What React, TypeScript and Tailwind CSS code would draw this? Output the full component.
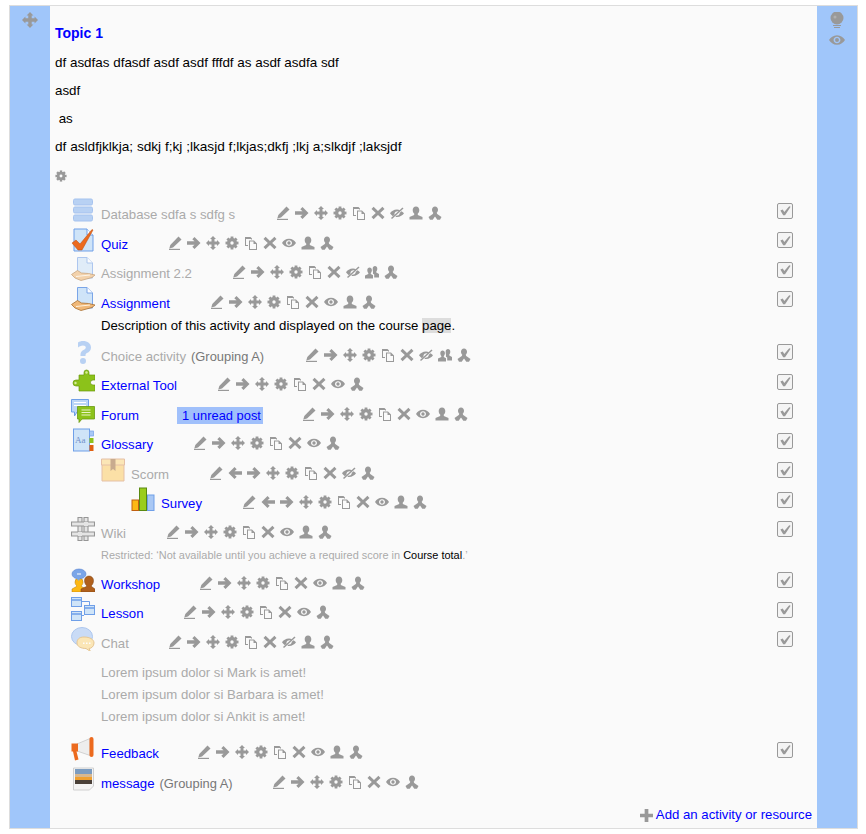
import type { ReactNode } from 'react';

type ActionName = 'edit' | 'left' | 'right' | 'move' | 'gear' | 'copy' | 'x' | 'eye' | 'eyeoff' | 'person' | 'group' | 'role';

const movePath =
  'M7 0l3 3H8.500v2.500H11V4l3 3-3 3V8.500H8.500V11H10l-3 3-3-3h1.500V8.500H3V10L0 7l3-3v1.500h2.500V3H4z';
const eyePath =
  'M7 2.800c3.200 0 5.700 2 7 4.200-1.300 2.200-3.800 4.200-7 4.200S1.300 9.200 0 7c1.300-2.200 3.800-4.200 7-4.200zm0 1.400C5.300 4.200 4 5.400 4 7s1.300 2.800 3 2.800S10 8.600 10 7 8.700 4.200 7 4.200zM7 5.300a1.700 1.700 0 110 3.400 1.700 1.700 0 010-3.400z';

function GearShape() {
  return (
    <>
      <circle cx="7" cy="7" r="3.500" fill="none" stroke="#999999" strokeWidth="3" />
      {[0, 45, 90, 135].map((a) => (
        <rect key={a} x="5.600" y="0.500" width="2.800" height="13" transform={`rotate(${a} 7 7)`} />
      ))}
      <circle cx="7" cy="7" r="1.700" fill="#fafafa" />
    </>
  );
}

function ActionIcon({ name }: { name: ActionName }) {
  const shapes: Record<ActionName, ReactNode> = {
    edit: (
      <>
        <path d="M10.500 .5l3 3-8.500 8-3.700 1 1-3.600z" />
        <rect x="1" y="12.800" width="11" height="1.200" />
      </>
    ),
    left: <path d="M6.500 1l2.200 2.200L6.500 5.300H14v3.400H6.500l2.200 2.100L6.500 13 .5 7z" />,
    right: <path d="M7.500 1L5.300 3.200l2.200 2.100H0v3.400h7.500l-2.200 2.100L7.500 13l6-6z" />,
    move: <path d={movePath} />,
    gear: <GearShape />,
    copy: (
      <>
        <path d="M1 1h5.500l1.500 1.500V3.500H7V3H2v6h2v1H1z" />
        <path d="M5 4.500h5l3 3V14H5zm1 1V13h6V8H9.500V5.500z" fillRule="evenodd" />
      </>
    ),
    x: <path d="M2.600 .8L7 5l4.400-4.200 2.100 2.100L9.200 7l4.300 4.100-2.100 2.100L7 9l-4.400 4.200-2.100-2.100L4.800 7 .5 2.900z" />,
    eye: <path d={eyePath} fillRule="evenodd" />,
    eyeoff: (
      <>
        <path
          d="M7 3.500c1.100 0 2.200.3 3.100.8L8.800 5.500A3 3 0 004.500 8.800L2.900 10.200C1.700 9.500.7 8.300 0 7.300c1.300-2 3.800-3.800 7-3.800zM11.500 5.300c1 .6 1.900 1.200 2.500 2-1.300 2-3.800 3.700-7 3.700-.6 0-1.100-.1-1.700-.2L6.700 9.600A3 3 0 009.800 6.800z"
          fillRule="evenodd"
        />
        <path d="M12.500 1.500l1 1L2 13l-1-1z" />
      </>
    ),
    person: <path d="M7 .5c2 0 3.300 1.500 3.300 3.600 0 1.600-.7 2.900-1.500 3.500v1.300L13.500 11v2.500H.5V11l4.700-2.100V7.600C4.400 7 3.700 5.700 3.700 4.100 3.700 2 5 .5 7 .5z" />,
    group: (
      <>
        <path d="M4.600 2.500c1.300 0 2.300 1 2.300 2.700 0 1.200-.5 2.200-1.100 2.700v1l2.200 1.300v3.300H0v-3l3.300-1.600v-1C2.700 7.400 2.300 6.400 2.300 5.200c0-1.700 1-2.700 2.300-2.700z" />
        <path d="M10 1c1.300 0 2.300 1 2.300 2.700 0 1.200-.4 2.200-1 2.700v1L14 9v3.500H9.200V9.600L8 8.800V6.500C7.800 6 7.700 4.900 7.700 3.700 7.700 2 8.700 1 10 1z" />
      </>
    ),
    role: <path d="M7 .5c1.800 0 3 1.400 3 3.300 0 1.300-.6 2.400-1.300 3L9.200 8l4.300 3-1.500 2.800H9.300L7 10.500l-2.300 3.300H2L.5 11l4.300-3 .5-1.200C4.600 6.200 4 5.100 4 3.800 4 1.900 5.200.5 7 .5z" />,
  };
  return (
    <svg viewBox="0 0 14 14" className="w-[14px] h-[14px] fill-[#999999]">
      {shapes[name]}
    </svg>
  );
}

function Actions({ names }: { names: ActionName[] }) {
  return (
    <div className="flex gap-[5px] mt-[8px]">
      {names.map((n, i) => (
        <ActionIcon key={i} name={n} />
      ))}
    </div>
  );
}

function CheckBox() {
  return (
    <div className="absolute right-[24px] top-[4.5px] w-[16px] h-[16px] rounded-[2px] border border-[#999999] bg-[#f4f4f4] flex items-center justify-center">
      <svg viewBox="0 0 14 14" className="w-[13px] h-[13px] fill-[#999999]">
        <path d="M1.500 7l2.500-1 1.700 2.500L11 2.500l1.500.5L6.500 12h-2z" />
      </svg>
    </div>
  );
}

function ActivityIcon({ name }: { name: string }) {
  const hand = (
    <>
      <path d="M.5 17.500l6-4 4 2.500 7 .5 6.500 1.500-3 2.500-11 3-6-2.500z" fill="#f0b878" stroke="#a86e30" strokeWidth=".8" />
      <path d="M5 19.500l14-1.500" stroke="#fff3e0" strokeWidth="1" />
    </>
  );
  const sheet = (
    <>
      <path d="M6.500 .5h9.500l5.500 5.500v15H6.500z" fill="#cfe4f8" stroke="#7aa5e8" />
      <path d="M16 .5V6h5.500" fill="#fff" stroke="#7aa5e8" />
    </>
  );
  const art: Record<string, ReactNode> = {
    database: (
      <>
        <rect x="2.500" y="1" width="19" height="6" rx="1.500" fill="#8db6f0" stroke="#6f9fe8" />
        <rect x="2.500" y="9" width="19" height="6" rx="1.500" fill="#8db6f0" stroke="#6f9fe8" />
        <rect x="2.500" y="17" width="19" height="6" rx="1.500" fill="#8db6f0" stroke="#6f9fe8" />
      </>
    ),
    quiz: (
      <>
        <path d="M3 1h13l6 6v16H3z" fill="#cfe4f8" stroke="#6f9fe8" />
        <path d="M16 1v6h6" fill="#fff" stroke="#6f9fe8" />
        <path d="M1 15l4-3 4 4L21 1.500 22 2 11 22H7z" fill="#ec6a1e" stroke="#b84c0c" strokeWidth=".5" />
      </>
    ),
    assign: (
      <>
        {sheet}
        {hand}
      </>
    ),
    choice: (
      <path d="M12 1c4.500 0 8 2.500 8 6.500 0 3-2 4.500-4 5.500-1.500.8-1.500 1.500-1.500 3h-5c0-3.500.5-4.500 3-6 1.500-.8 2.300-1.500 2.300-2.500 0-1.200-1.100-2-2.800-2-2 0-4 1-5 2V2.500C8.500 1.500 10 1 12 1zM12 18a3 3 0 110 6 3 3 0 010-6z" fill="#8db6f0" />
    ),
    tool: (
      <>
        <path d="M8 6h5V3.500a2.500 2.500 0 115 0V6h6v5h-2a2.500 2.500 0 100 5h2v6H8v-5H5a3 3 0 110-6h3z" fill="#8cc21a" stroke="#6a9a10" strokeWidth=".7" />
        <circle cx="15.500" cy="3.500" r="1.200" fill="#d8ee9a" />
        <circle cx="4.500" cy="14" r="1.200" fill="#d8ee9a" />
      </>
    ),
    forum: (
      <>
        <path d="M.5 .5h17V13H6l-2.500 4v-4H.5z" fill="#bcd6f6" stroke="#6f9fe8" />
        <path d="M3 3.500h12M3 6.500h12" stroke="#fff" />
        <path d="M6.500 7.500h17V20H11l-3 3.500V20H6.500z" fill="#8cc21a" stroke="#6a9a10" strokeWidth=".8" />
        <path d="M10.500 11h9M10.500 13.500h9M10.500 16h9" stroke="#e8f4c8" />
      </>
    ),
    glossary: (
      <>
        <rect x="2.500" y="1" width="16" height="22" fill="#cfe4f8" stroke="#6f9fe8" />
        <rect x="18.500" y="3" width="4" height="5" fill="#a9c8f4" stroke="#6f9fe8" strokeWidth=".7" />
        <rect x="18.500" y="10" width="4" height="5" fill="#8cc21a" />
        <rect x="18.500" y="17" width="4" height="6" fill="#e06010" />
        <text x="4" y="15" fontSize="9" fontFamily="Liberation Serif, serif" fill="#6f8fc8">Aa</text>
      </>
    ),
    scorm: (
      <>
        <path d="M1 6h22v17H1z" fill="#fcd070" stroke="#d89a70" />
        <path d="M.5 1h23v6H.5z" fill="#fdd98a" stroke="#d89a70" />
        <path d="M9.500 1h5v12l-2.500-2-2.500 2z" fill="#a87848" />
      </>
    ),
    survey: (
      <>
        <rect x="1" y="13" width="6.500" height="10.500" fill="#fdb813" stroke="#c06010" />
        <rect x="8.500" y="1" width="7" height="22.500" fill="#9acd1e" stroke="#5a8a10" />
        <rect x="16.500" y="8" width="6.500" height="15.500" fill="#a9c8f4" stroke="#6f9fe8" />
      </>
    ),
    wiki: (
      <g fill="#d8d8d8" stroke="#555555" strokeWidth="1.100">
        <path d="M7 .5h4v23H7zM13 .5h4v23h-4z" />
        <path d="M.5 5h23v4H.5zM.5 15h23v4H.5z" />
        <path d="M7 15h4v4H7zM13 5h4v4h-4z" stroke="none" />
      </g>
    ),
    workshop: (
      <>
        <path d="M8 10a4 4 0 014 4c0 2-1 3-1.500 3.500v1L15 21v3H1v-3l4.500-2.500v-1C5 17 4 16 4 14a4 4 0 014-4z" fill="#fdb813" stroke="#b87808" strokeWidth=".5" />
        <path d="M18 8a4.500 4.500 0 014.500 4.500c0 2.500-1 4-2 5v1L24 21v3H10v-3l5.500-2.500v-1c-1-1-2-2.500-2-5A4.500 4.500 0 0118 8z" fill="#b0601c" stroke="#7a4010" strokeWidth=".5" />
        <ellipse cx="8" cy="6" rx="7" ry="5" fill="#7aa5e8" stroke="#5a85d0" strokeWidth=".6" />
        <path d="M5 10l3 3 1-3z" fill="#7aa5e8" />
        <path d="M6.500 5h1v2h-1zM8.500 5h1v2h-1z" fill="#fff" />
      </>
    ),
    lesson: (
      <g stroke="#6f9fe8" fill="#cfe4f8">
        <rect x=".5" y=".5" width="10" height="9" />
        <rect x=".5" y="14.500" width="10" height="9" />
        <rect x="13.500" y="8.500" width="10" height="9" />
        <path d="M10.500 4.500H18.500V8.500M10.500 18.500H13" fill="none" />
        <path d="M1 3h9M1 17h9M14 11h9" strokeWidth="1.500" />
      </g>
    ),
    chat: (
      <>
        <ellipse cx="11" cy="9.500" rx="10.500" ry="9" fill="#a9c8f4" stroke="#7aa5e8" />
        <path d="M13 10c6 0 10 2.500 10 6s-3 5.500-5 5.500l1.500 3-4.500-3c-5 0-9-2-9-5.500S8 10 13 10z" fill="#fdd98a" stroke="#d8a450" />
        <path d="M12 15.500h1.500v1.500H12zM15 15.500h1.500v1.500H15zM18 15.500h1.500v1.500H18z" fill="#fff" />
      </>
    ),
    feedback: (
      <>
        <path d="M6 7l13-5.500v17L6 14z" fill="#eeeeee" stroke="#bbbbbb" strokeWidth=".6" />
        <path d="M.5 6.500h6.500v8H5.500l2 8-3.500 1-2-9H.5z" fill="#ec6a1e" />
        <rect x="18.500" y="0" width="4" height="20" rx="2" fill="#ec6a1e" />
      </>
    ),
    message: (
      <>
        <path d="M2.500 1h20v18l-4 4H2.500z" fill="#f4f4f4" stroke="#d0d0d0" />
        <rect x="4" y="2" width="17" height="5" fill="#7c9cc0" />
        <rect x="4" y="7" width="17" height="3" fill="#d8b890" />
        <rect x="4" y="10" width="17" height="3" fill="#f0a030" />
        <rect x="4" y="13" width="17" height="4" fill="#4a4038" />
      </>
    ),
  };
  return (
    <svg viewBox="0 0 24 24" className="w-[24px] h-[24px] shrink-0">
      {art[name]}
    </svg>
  );
}

const eyeSet: ActionName[] = ['edit', 'right', 'move', 'gear', 'copy', 'x'];

function Row(props: {
  icon: string;
  name: string;
  nameWidth: string;
  actions: ActionName[];
  dim?: boolean;
  indent?: string;
  suffix?: ReactNode;
  check?: boolean;
}) {
  const { icon, name, nameWidth, actions, dim, indent = 'pl-[21px]', suffix, check = true } = props;
  return (
    <div className={`relative flex items-start h-[29.5px] ${indent}`}>
      <div className={dim ? 'opacity-60' : ''}>
        <ActivityIcon name={icon} />
      </div>
      <div className={`ml-[6px] mt-[8.25px] text-[13.2px] leading-[18px] whitespace-nowrap ${nameWidth}`}>
        <span className={dim ? 'text-[#aaaaaa]' : 'text-[#0000ff]'}>{name}</span>
        {suffix}
      </div>
      <Actions names={actions} />
      {check && <CheckBox />}
    </div>
  );
}

function Grouping() {
  return <span className="text-[#777777] text-[12.9px] ml-[5px]">(Grouping A)</span>;
}

export default function App() {
  return (
    <div className="w-[866px] h-[834px] bg-white pt-[5px] pl-[9px] font-['Liberation_Sans',Arial,sans-serif] text-[13.2px] text-black">
      <div className="flex w-[849px] h-[824px] border border-[#dddddd]">
        <div className="w-[40px] bg-[#a0c6fa] flex justify-center pt-[6px] shrink-0">
          <svg viewBox="0 0 14 14" className="w-[16px] h-[16px] fill-[#999999]">
            <path d={movePath} />
          </svg>
        </div>

        <div className="flex-1 bg-[#fafafa] relative">
          <div className="pl-[5px] pt-[18px]">
            <h3 className="text-[14px] leading-[18px] font-bold text-[#0000ff]">Topic 1</h3>
            <div className="mt-[11.5px] flex flex-col gap-[10px] leading-[18px]">
              <p className="text-[13.43px]">df asdfas dfasdf asdf asdf fffdf as asdf asdfa sdf</p>
              <p className="text-[13.33px]">asdf</p>
              <p className="text-[13.33px]">&nbsp;as</p>
              <p className="text-[13.65px]">df asldfjklkja; sdkj f;kj ;lkasjd f;lkjas;dkfj ;lkj a;slkdjf ;laksjdf</p>
            </div>
            <svg viewBox="0 0 14 14" className="w-[12px] h-[12px] mt-[14px] fill-[#999999]">
              <GearShape />
            </svg>
          </div>

          <div className="mt-[16.5px]">
            <Row icon="database" name="Database sdfa s sdfg s" nameWidth="w-[175px]" dim actions={[...eyeSet, 'eyeoff', 'person', 'role']} />
            <Row icon="quiz" name="Quiz" nameWidth="w-[67px]" actions={[...eyeSet, 'eye', 'person', 'role']} />
            <Row icon="assign" name="Assignment 2.2" nameWidth="w-[131px]" dim actions={[...eyeSet, 'eyeoff', 'group', 'role']} />
            <Row icon="assign" name="Assignment" nameWidth="w-[109px]" actions={[...eyeSet, 'eye', 'person', 'role']} />
            <div className="h-[23.5px] pl-[51px] pt-[1px] leading-[18px]">
              Description of this activity and displayed on the course <span className="bg-[#dddddd]">page</span>.
            </div>
            <Row icon="choice" name="Choice activity" nameWidth="w-[204px]" dim suffix={<Grouping />} actions={[...eyeSet, 'eyeoff', 'group', 'role']} />
            <Row icon="tool" name="External Tool" nameWidth="w-[116px]" actions={[...eyeSet, 'eye', 'role']} />
            <Row
              icon="forum"
              name="Forum"
              nameWidth="w-[201px]"
              suffix={<span className="ml-[38px] bg-[#a0c0fb] text-[#0000ff] text-[12.9px] pl-[5px] pr-[2px] py-[1px]">1 unread post</span>}
              actions={[...eyeSet, 'eye', 'person', 'role']}
            />
            <Row icon="glossary" name="Glossary" nameWidth="w-[92px]" actions={[...eyeSet, 'eye', 'role']} />
            <Row icon="scorm" name="Scorm" nameWidth="w-[78px]" dim indent="pl-[51px]" actions={['edit', 'left', 'right', 'move', 'gear', 'copy', 'x', 'eyeoff', 'role']} />
            <Row icon="survey" name="Survey" nameWidth="w-[81px]" indent="pl-[81px]" actions={['edit', 'left', 'right', 'move', 'gear', 'copy', 'x', 'eye', 'person', 'role']} />
            <Row icon="wiki" name="Wiki" nameWidth="w-[65px]" dim actions={[...eyeSet, 'eye', 'person', 'role']} />
            <div className="h-[21.5px] pl-[51px] pt-[1px] text-[10.94px] leading-[16px] text-[#aaaaaa]">
              Restricted: ‘Not available until you achieve a required score in <span className="text-black">Course total</span>.’
            </div>
            <Row icon="workshop" name="Workshop" nameWidth="w-[98px]" actions={[...eyeSet, 'eye', 'person', 'role']} />
            <Row icon="lesson" name="Lesson" nameWidth="w-[82px]" actions={[...eyeSet, 'eye', 'role']} />
            <Row icon="chat" name="Chat" nameWidth="w-[67px]" dim actions={[...eyeSet, 'eyeoff', 'person', 'role']} />
            <div className="pl-[51px] pt-[6px] pb-[9px] text-[#aaaaaa] leading-[22px]">
              <p>Lorem ipsum dolor si Mark is amet!</p>
              <p>Lorem ipsum dolor si Barbara is amet!</p>
              <p>Lorem ipsum dolor si Ankit is amet!</p>
            </div>
            <Row icon="feedback" name="Feedback" nameWidth="w-[96px]" actions={[...eyeSet, 'eye', 'person', 'role']} />
            <Row icon="message" name="message" nameWidth="w-[171px]" check={false} suffix={<Grouping />} actions={[...eyeSet, 'eye', 'role']} />
          </div>

          <div className="absolute right-[5px] bottom-[4px] flex items-center gap-[3px] text-[#0000ff] leading-[18px]">
            <svg viewBox="0 0 14 14" className="w-[13px] h-[13px] fill-[#999999]">
              <path d="M5 0h4v5h5v4H9v5H5V9H0V5h5z" />
            </svg>
            Add an activity or resource
          </div>
        </div>

        <div className="w-[40px] bg-[#a0c6fa] flex flex-col items-center pt-[6px] shrink-0">
          <svg viewBox="0 0 14 16" className="w-[14px] h-[16px] fill-[#999999]">
            <circle cx="7" cy="6" r="6.500" />
            <circle cx="5" cy="5" r="1.500" fill="#b0b0b0" />
            <rect x="3" y="13" width="8" height="1" />
            <rect x="4" y="15" width="6" height="1" />
          </svg>
          <svg viewBox="0 0 14 14" className="w-[16px] h-[16px] mt-[4px] fill-[#999999]">
            <path d={eyePath} fillRule="evenodd" />
          </svg>
        </div>
      </div>
    </div>
  );
}
